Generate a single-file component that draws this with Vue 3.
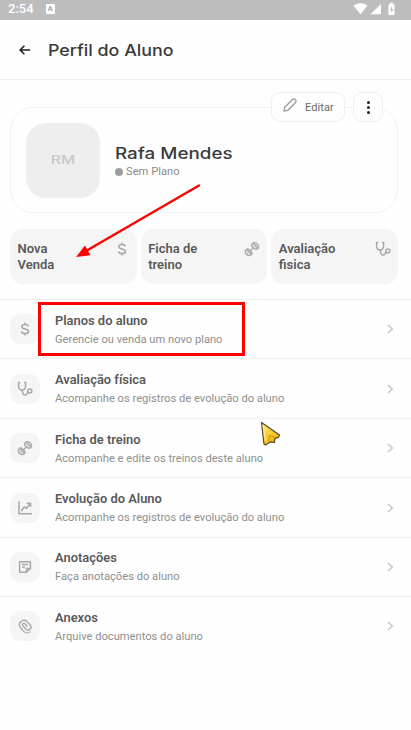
<template>
  <div class="screen">
    <div class="status-bar">
      <span class="clock">2:54</span>
      <span class="status-badge">A</span>
      <svg class="status-icons" width="44" height="14" viewBox="0 0 44 14" fill="#fff">
        <path d="M0.5 3.6 Q7.5 -1 14.5 3.6 L7.5 12.2 Z" />
        <path d="M28 2 V12.2 H17.5 Z" />
        <path d="M35.5 2.2 H37 V0.8 H40 V2.2 H41.5 V13 H35.5 Z" />
        <path d="M39 4 L37 8 H38.3 V11 L40.4 7 H39 Z" fill="#bdbdbd" />
      </svg>
    </div>

    <header class="header">
      <svg class="back" width="12" height="12" viewBox="0 0 12 12">
        <path d="M11.2 6 H1.3 M5.4 1.7 L1.1 6 L5.4 10.3" />
      </svg>
      <h1 class="title">Perfil do Aluno</h1>
    </header>

    <section class="profile">
      <div class="actions">
        <button class="edit">
          <svg class="pencil" width="14" height="14" viewBox="0 0 14 14">
            <path d="M1 13 L1.7 9.2 L9.2 1.7 Q10.8 0.2 12.4 1.6 Q13.8 3.2 12.3 4.8 L4.8 12.3 Z" />
          </svg>
          <span>Editar</span>
        </button>
        <button class="more"><i></i><i></i><i></i></button>
      </div>
      <div class="avatar"><span>RM</span></div>
      <div class="identity">
        <h2 class="name">Rafa Mendes</h2>
        <p class="plan"><i class="dot"></i>Sem Plano</p>
      </div>
    </section>

    <div class="shortcuts">
      <div v-for="item in shortcuts" :key="item.icon" class="shortcut">
        <span class="shortcut-label">{{ item.first }}<br />{{ item.second }}</span>
        <svg class="icon" :class="item.icon" width="16" height="16" viewBox="0 0 16 16">
          <path v-for="(d, i) in icons[item.icon]" :key="i" :d="d" />
        </svg>
      </div>
    </div>

    <ul class="menu">
      <li v-for="item in menu" :key="item.title" class="menu-item">
        <span class="menu-icon">
          <svg class="icon" :class="item.icon" width="16" height="16" viewBox="0 0 16 16">
            <path v-for="(d, i) in icons[item.icon]" :key="i" :d="d" />
          </svg>
        </span>
        <div class="menu-text">
          <strong>{{ item.title }}</strong>
          <small>{{ item.text }}</small>
        </div>
        <svg class="chevron" width="7" height="10" viewBox="0 0 7 10">
          <path d="M1 1 L5.2 5 L1 9" />
        </svg>
      </li>
    </ul>

    <!-- marcações por cima da tela -->
    <div class="highlight"></div>
    <svg class="arrow" width="130" height="80" viewBox="0 0 130 80">
      <path d="M125 5.5 L12 71" stroke="#f00" stroke-width="2.4" stroke-linecap="round" />
      <path d="M2 77 L11 65.6 L16.5 75.2 Z" fill="#f00" />
    </svg>
    <svg class="cursor" width="22" height="26" viewBox="0 0 22 26">
      <defs>
        <linearGradient id="gold" x1="0" y1="0" x2="0.6" y2="1">
          <stop offset="0" stop-color="#fff3a0" />
          <stop offset="0.55" stop-color="#f8cf3c" />
          <stop offset="1" stop-color="#eeae00" />
        </linearGradient>
      </defs>
      <path d="M1.5 1.5 L19.5 14 L18.4 16.4 L15 17.4 L14.4 21.3 L10.5 20.8 L5.5 24 L3.9 22.8 Z" fill="url(#gold)" stroke="#5c4a22" stroke-width="1.2" stroke-linejoin="round" />
      <path d="M8.8 20 L9.3 14.4 L14.6 16.2" stroke="#b98a16" stroke-width="0.8" />
      <path d="M3 4 L5.5 20" stroke="#fff0a0" stroke-width="0.9" />
    </svg>
  </div>
</template>

<script setup>
const icons = {
  money: [
    'M8 1.4 V3.3 M8 12.7 V14.6 M11.3 5.4 Q10.8 3.5 8 3.5 Q4.8 3.5 4.8 5.6 Q4.8 7.4 8 8 Q11.5 8.6 11.5 10.5 Q11.5 12.6 8 12.6 Q5 12.6 4.5 10.5'
  ],
  dumbbell: [
    'M7.6 3.8 Q8 1.6 10.2 1.7 Q13 1.6 14.2 4 Q15.4 6.6 13.4 7.9 Q11.4 9 9.4 6.9 Q7.3 5.2 7.6 3.8 Z',
    'M1.9 8.9 Q3.6 7.2 5.6 8.9 L7.5 11 Q8.8 12.8 7 14 Q4.7 15.4 2.6 13.6 Q0.3 11 1.9 8.9 Z',
    'M6.7 9.5 L9.3 6.8',
    'M9.6 2.5 L13.6 6.9 M3.4 9.2 L7.2 13.2'
  ],
  stethoscope: [
    'M3.2 1.6 H1.6 V5 Q1.8 9 5 9 Q8.4 9 8.6 5 V1.6 H7',
    'M5 9 L6 12.4 Q6.9 14.7 9 13.8 Q10.5 13.2 10.7 10.7',
    'M14.8 10 A2 2 0 1 1 10.8 10 A2 2 0 1 1 14.8 10'
  ],
  chart: [
    'M2 1.3 V13.7 H14.8',
    'M4.5 11 L7.3 6.8 L9.4 8.5 L13.3 3.5',
    'M9.8 3.3 H13.5 V7'
  ],
  note: [
    'M2.6 2.7 H13.4 V9.4 L9.5 13.3 H2.6 Z',
    'M9.5 13.3 V9.4 H13.4',
    'M5 5.5 H11 M5 8 H8'
  ],
  clip: [
    'M10.2 8.5 L7.9 6 A1.3 1.3 0 0 0 6 7.8 L8.7 10.7 A2.65 2.65 0 0 0 12.6 7.1 L9.6 3.9 A4 4 0 0 0 3.8 9.3 L7.2 13 A4 4 0 0 0 12.8 13'
  ]
}

const shortcuts = [
  { first: 'Nova', second: 'Venda', icon: 'money' },
  { first: 'Ficha de', second: 'treino', icon: 'dumbbell' },
  { first: 'Avaliação', second: 'fisica', icon: 'stethoscope' }
]

const menu = [
  { title: 'Planos do aluno', text: 'Gerencie ou venda um novo plano', icon: 'money' },
  { title: 'Avaliação física', text: 'Acompanhe os registros de evolução do aluno', icon: 'stethoscope' },
  { title: 'Ficha de treino', text: 'Acompanhe e edite os treinos deste aluno', icon: 'dumbbell' },
  { title: 'Evolução do Aluno', text: 'Acompanhe os registros de evolução do aluno', icon: 'chart' },
  { title: 'Anotações', text: 'Faça anotações do aluno', icon: 'note' },
  { title: 'Anexos', text: 'Arquive documentos do aluno', icon: 'clip' }
]
</script>

<style>
body {
  background: #fefefe;
}
</style>

<style scoped>
.screen {
  position: relative;
  width: 411px;
  height: 730px;
  overflow: hidden;
  background: #fefefe;
  font-family: Roboto, 'Liberation Sans', sans-serif;
}

svg {
  display: block;
  fill: none;
  flex: none;
}

.status-bar {
  display: flex;
  align-items: center;
  height: 20px;
  padding: 0 14px 2px 8px;
  box-sizing: border-box;
  background: #bdbdbd;
  color: #fff;
}

.clock {
  font-size: 13px;
  font-weight: 500;
  line-height: 18px;
}

.status-badge {
  width: 9px;
  height: 10px;
  margin-left: 12px;
  border-radius: 1px;
  background: #fff;
  color: #aaa;
  font-size: 8px;
  font-weight: 700;
  line-height: 10px;
  text-align: center;
}

.status-icons {
  margin-left: auto;
  fill: #fff;
}

.header {
  display: flex;
  align-items: center;
  height: 60px;
  padding-left: 19px;
  box-sizing: border-box;
  border-bottom: 1px solid #f0f0f0;
}

.back {
  stroke: #222;
  stroke-width: 1.6;
}

.title {
  margin: 0 0 0 17px;
  color: #3a3a3a;
  font-family: Inter, 'Liberation Sans', sans-serif;
  font-size: 16px;
  font-weight: 500;
  transform: scaleX(1.115);
  transform-origin: left;
}

.profile {
  position: relative;
  display: flex;
  align-items: center;
  width: 388px;
  height: 106px;
  margin: 27px 0 0 10px;
  padding-left: 15px;
  box-sizing: border-box;
  border: 1px solid #f2f2f2;
  border-radius: 23px;
}

/* botões sobre a borda do cartão */
.actions {
  position: absolute;
  top: -16px;
  right: 14px;
  display: flex;
  gap: 8px;
}

.edit,
.more {
  display: flex;
  align-items: center;
  height: 30px;
  padding: 0;
  box-sizing: border-box;
  border: 1px solid #f0f0f0;
  border-radius: 9px;
  background: #fefefe;
}

.edit {
  width: 74px;
  padding-left: 11px;
  gap: 8px;
  color: #6a6a6a;
  font-family: Roboto, sans-serif;
  font-size: 11px;
  letter-spacing: 0.1px;
}

.pencil {
  margin-top: -4px;
  stroke: #999;
  stroke-width: 1.3;
}

.more {
  flex-direction: column;
  justify-content: center;
  width: 30px;
  gap: 2px;
}

.more i {
  width: 3px;
  height: 3px;
  border-radius: 50%;
  background: #222;
}

.avatar {
  display: flex;
  align-items: center;
  justify-content: center;
  width: 74px;
  height: 75px;
  border-radius: 20px;
  background: #eee;
  color: #c8c8c8;
  font-family: Inter, sans-serif;
  font-size: 11.5px;
  font-weight: 500;
}

.avatar span {
  transform: scaleX(1.36);
}

.identity {
  margin: 3px 0 0 15px;
}

.name {
  margin: 0;
  color: #3a3a3a;
  font-family: Inter, 'Liberation Sans', sans-serif;
  font-size: 16px;
  font-weight: 500;
  line-height: 20px;
  transform: scaleX(1.175);
  transform-origin: left;
}

.plan {
  display: flex;
  align-items: center;
  margin: 0;
  color: #8c8c8c;
  font-size: 11.2px;
  line-height: 18px;
}

.dot {
  width: 8px;
  height: 8px;
  margin: 1px 3px 0 0;
  border-radius: 50%;
  background: #9e9e9e;
}

.shortcuts {
  display: grid;
  grid-template-columns: repeat(3, 1fr);
  gap: 4px;
  width: 388px;
  margin: 16px 0 0 10px;
}

.shortcut {
  display: flex;
  justify-content: space-between;
  height: 55px;
  padding: 12px 7px 0 7.5px;
  box-sizing: border-box;
  border-radius: 13px;
  background: #f5f5f5;
}

.shortcut-label {
  color: #5a5a5a;
  font-size: 13px;
  font-weight: 600;
  line-height: 16px;
}

.icon {
  stroke: #a8a8a8;
  stroke-width: 1.5;
  stroke-linejoin: round;
}

.icon.dumbbell {
  fill: #dedede;
  stroke-width: 1.3;
}

.icon.clip {
  width: 18px;
  height: 18px;
  stroke-width: 1.2;
}

.menu {
  margin: 15px 0 0;
  padding: 0;
  list-style: none;
}

.menu-item {
  display: flex;
  align-items: center;
  height: 59.45px;
  padding: 0 17px 0 10px;
  box-sizing: border-box;
  border-top: 1px solid #f0f0f0;
}

.menu-icon {
  display: flex;
  align-items: center;
  justify-content: center;
  width: 30px;
  height: 30px;
  border-radius: 10px;
  background: #f5f5f5;
}

.menu-text {
  display: flex;
  flex: 1;
  flex-direction: column;
  margin: 2px 0 0 15px;
}

.menu-text strong {
  color: #5a5a5a;
  font-size: 12.9px;
  font-weight: 600;
  line-height: 18px;
}

.menu-text small {
  color: #8f8f8f;
  font-size: 11.16px;
  line-height: 19px;
}

.chevron {
  stroke: #c8c8c8;
  stroke-width: 1.6;
}

.highlight {
  position: absolute;
  top: 302px;
  left: 38px;
  width: 207px;
  height: 54px;
  box-sizing: border-box;
  border: 3px solid #f00;
}

.arrow {
  position: absolute;
  top: 180px;
  left: 74px;
}

.cursor {
  position: absolute;
  top: 421px;
  left: 260px;
}
</style>
